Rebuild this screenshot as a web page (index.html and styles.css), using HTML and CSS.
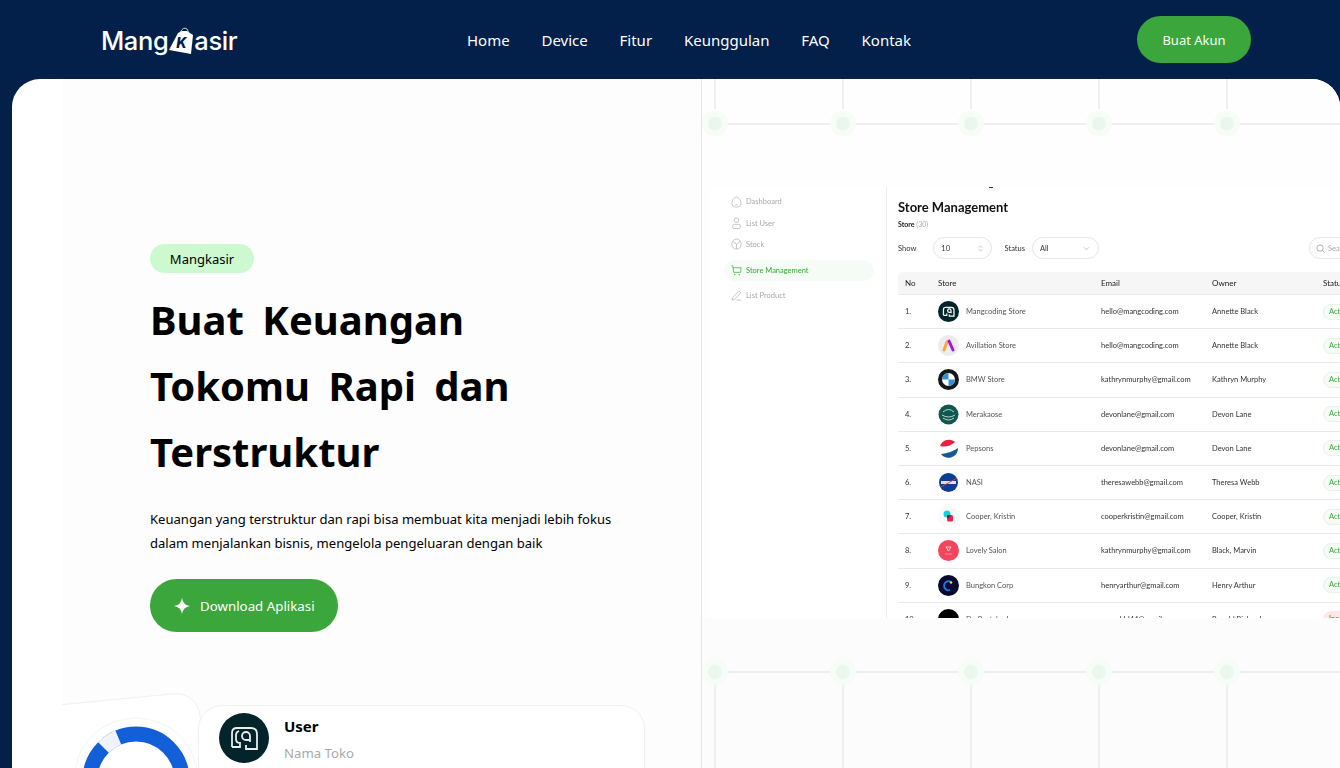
FILE: index.html
```html
<!DOCTYPE html>
<html lang="id">
<head>
<meta charset="utf-8">
<title>Mangkasir</title>
<link rel="stylesheet" href="styles.css">
</head>
<body>
<header class="topbar">
  <a class="logo"><span>Mang</span><span class="bag"><svg viewBox="0 0 28 30" width="28" height="30"><path d="M12 8 Q15 1 19 4 Q21 6 20 9" fill="none" stroke="#c9d6e6" stroke-width="1"/><path d="M10 8 L1 25 L23 29 L25 10 L19 6 L14 6 Z" fill="#fff"/></svg><b class="bag-k">K</b></span><span>asir</span></a>
  <nav class="nav"><a>Home</a><a>Device</a><a>Fitur</a><a>Keunggulan</a><a>FAQ</a><a>Kontak</a></nav>
  <a class="cta">Buat Akun</a>
</header>
<main class="panel">
  <section class="hero">
    <span class="badge">Mangkasir</span>
    <h1>Buat Keuangan<br>Tokomu Rapi dan<br>Terstruktur</h1>
    <p>Keuangan yang terstruktur dan rapi bisa membuat kita menjadi lebih fokus<br>dalam menjalankan bisnis, mengelola pengeluaran dengan baik</p>
    <a class="download"><svg viewBox="0 0 16 16" width="16" height="16"><path d="M8 0 Q9 7 16 8 Q9 9 8 16 Q7 9 0 8 Q7 7 8 0 Z" fill="#fff"/></svg>Download Aplikasi</a>
    <div class="chart-card"></div>
    <svg class="donut" viewBox="0 0 130 130" width="130" height="130">
      <circle cx="65" cy="65" r="62" fill="#fff" stroke="#f3f3f3"/>
      <circle cx="65" cy="65" r="46" fill="none" stroke="#125fd8" stroke-width="15"/>
      <path d="M32.5 32.5 A46 46 0 0 1 47.3 22.5" fill="none" stroke="#eef3fd" stroke-width="15"/>
    </svg>
    <div class="user-card">
      <svg class="avatar" viewBox="0 0 50 50" width="50" height="50">
        <circle cx="25" cy="25" r="25" fill="#03242a"/>
        <path d="M13 34 V20 Q13 15 18 15 H32 Q38 15 38 21 V36 H27 V32 M13 34 H21 V30 Q17 30 17 26 V22 Q17 19 20 18 M31 29 V23 A4 4 0 1 0 27 27 H31" fill="none" stroke="#e8eeee" stroke-width="1.8"/>
      </svg>
      <div><strong>User</strong><span>Nama Toko</span></div>
    </div>
  </section>
  <section class="showcase">
    <svg class="strip strip-top" viewBox="0 0 638 108" width="638" height="108">
      <g stroke="#efefef" stroke-width="2" fill="none">
        <path d="M141 0V30M269 0V30M397 0V30M525 0V30M13 0V30"/>
        <path d="M26 45H128M154 45H256M282 45H384M410 45H512M538 45H638"/>
      </g>
      <g fill="#f6fcf6"><circle cx="13" cy="44.5" r="13"/><circle cx="141" cy="44.5" r="13"/><circle cx="269" cy="44.5" r="13"/><circle cx="397" cy="44.5" r="13"/><circle cx="525" cy="44.5" r="13"/></g>
      <g fill="#ebf7ec"><circle cx="13" cy="44.5" r="7"/><circle cx="141" cy="44.5" r="7"/><circle cx="269" cy="44.5" r="7"/><circle cx="397" cy="44.5" r="7"/><circle cx="525" cy="44.5" r="7"/></g>
    </svg>
    <div class="shot">
      <aside class="side">
        <div class="side-item"><svg viewBox="0 0 12 13" width="11" height="12"><path d="M6 1 Q11 3 11 8 Q11 12 6 12 Q1 12 1 8 Q1 3 6 1 Z M4.5 9.5 H7.5" fill="none" stroke="#aaa" stroke-width=".7"/></svg>Dashboard</div>
        <div class="side-item"><svg viewBox="0 0 12 13" width="11" height="12"><circle cx="6" cy="3.5" r="2.5" fill="none" stroke="#aaa" stroke-width=".7"/><rect x="1.5" y="8" width="9" height="4.5" rx="2.2" fill="none" stroke="#aaa" stroke-width=".7"/></svg>List User</div>
        <div class="side-item"><svg viewBox="0 0 12 13" width="11" height="12"><path d="M6 1 Q11 2 11 6.5 Q11 12 6 12 Q1 12 1 6.5 Q1 2 6 1 Z M2 4 L6 6.5 L10 4 M6 6.5 V12" fill="none" stroke="#aaa" stroke-width=".7"/></svg>Stock</div>
        <div class="side-item side-active"><svg viewBox="0 0 12 12" width="11" height="11"><path d="M0.5 1 H2 L3 8 H10.5 L11 3 H2.5" fill="none" stroke="#3aa63b" stroke-width=".8"/><circle cx="4" cy="10.5" r=".7" fill="#3aa63b"/><circle cx="9" cy="10.5" r=".7" fill="#3aa63b"/></svg>Store Management</div>
        <div class="side-item"><svg viewBox="0 0 12 12" width="11" height="11"><path d="M1 11 L2 8 L8 2 Q9 1 10 2 Q11 3 10 4 L4 10 Z M6 11 H11" fill="none" stroke="#aaa" stroke-width=".7"/></svg>List Product</div>
      </aside>
      <div class="store">
        <h2>Store Management</h2>
        <div class="count"><b>Store</b> <span>(30)</span></div>
        <div class="tools">
          <span>Show</span><span class="sel sel-show">10<svg viewBox="0 0 6 8" width="5" height="7"><path d="M1 3 L3 1 L5 3 M1 5 L3 7 L5 5" fill="none" stroke="#999" stroke-width=".7"/></svg></span>
          <span class="tool-status">Status</span><span class="sel sel-status">All<svg viewBox="0 0 8 6" width="7" height="5"><path d="M1 1.5 L4 4.5 L7 1.5" fill="none" stroke="#999" stroke-width=".7"/></svg></span>
          <span class="search"><svg viewBox="0 0 10 10" width="9" height="9"><circle cx="4.5" cy="4.5" r="3.5" fill="none" stroke="#888" stroke-width=".7"/><path d="M7 7 L9.5 9.5" stroke="#888" stroke-width=".7"/></svg>Search</span>
        </div>
        <div class="row row-head"><span>No</span><span>Store</span><span>Email</span><span>Owner</span><span>Status</span></div>
        <div class="row"><span>1.</span><span class="st"><svg viewBox="0 0 50 50" width="21" height="21"><circle cx="25" cy="25" r="25" fill="#03242a"/><path d="M13 34 V20 Q13 15 18 15 H32 Q38 15 38 21 V36 H27 V32 M13 34 H21 V30 M31 29 V23 A4 4 0 1 0 27 27 H31" fill="none" stroke="#fff" stroke-width="3"/></svg>Mangcoding Store</span><span>hello@mangcoding.com</span><span>Annette Black</span><span class="pill">Active</span></div>
        <div class="row"><span>2.</span><span class="st"><svg viewBox="0 0 21 21" width="21" height="21"><circle cx="10.5" cy="10.5" r="10.5" fill="#ececec"/><path d="M6 15 L9 7" stroke="#f8a73c" stroke-width="3" stroke-linecap="round"/><path d="M11 6 L15 15" stroke="#a912e0" stroke-width="3" stroke-linecap="round"/></svg>Avillation Store</span><span>hello@mangcoding.com</span><span>Annette Black</span><span class="pill">Active</span></div>
        <div class="row"><span>3.</span><span class="st"><svg viewBox="0 0 21 21" width="21" height="21"><circle cx="10.5" cy="10.5" r="10.5" fill="#171717"/><circle cx="10.5" cy="10.5" r="6.5" fill="#fff"/><path d="M10.5 4V10.5H4A6.5 6.5 0 0 1 10.5 4ZM10.5 17V10.5H17A6.5 6.5 0 0 1 10.5 17Z" fill="#2e94d6"/></svg>BMW Store</span><span>kathrynmurphy@gmail.com</span><span>Kathryn Murphy</span><span class="pill">Active</span></div>
        <div class="row"><span>4.</span><span class="st"><svg viewBox="0 0 21 21" width="21" height="21"><circle cx="10.5" cy="10.5" r="10" fill="#10574f"/><path d="M4 11 Q10.5 15 17 11 M5 14 Q10.5 18 16 14 M5 8 Q10.5 3 16 8" fill="none" stroke="#b7d8cc" stroke-width="1"/></svg>Merakaose</span><span>devonlane@gmail.com</span><span>Devon Lane</span><span class="pill">Active</span></div>
        <div class="row"><span>5.</span><span class="st"><svg viewBox="0 0 21 21" width="21" height="21"><circle cx="10.5" cy="10.5" r="9.5" fill="#fff"/><path d="M2 8 A9.5 9.5 0 0 1 17 4 Q10 10 2 8 Z" fill="#e8203a"/><path d="M20 10 A9.5 9.5 0 0 1 3 16 Q13 15 20 10 Z" fill="#155a96"/></svg>Pepsons</span><span>devonlane@gmail.com</span><span>Devon Lane</span><span class="pill">Active</span></div>
        <div class="row"><span>6.</span><span class="st"><svg viewBox="0 0 21 21" width="21" height="21"><circle cx="10.5" cy="10.5" r="9.5" fill="#0d3d91"/><rect x="3" y="9" width="15" height="3" fill="#fff" opacity=".85"/><path d="M3 15 L19 6" stroke="#e03c31" stroke-width="1"/></svg>NASI</span><span>theresawebb@gmail.com</span><span>Theresa Webb</span><span class="pill">Active</span></div>
        <div class="row"><span>7.</span><span class="st"><svg viewBox="0 0 21 21" width="21" height="21"><circle cx="10.5" cy="10.5" r="10.5" fill="#fcf8f8"/><circle cx="9" cy="8" r="3.5" fill="#0cd3e0"/><rect x="9" y="9" width="6" height="6.5" rx="1.5" fill="#ee2050"/><rect x="9" y="9" width="2.5" height="2.5" fill="#111"/></svg>Cooper, Kristin</span><span>cooperkristin@gmail.com</span><span>Cooper, Kristin</span><span class="pill">Active</span></div>
        <div class="row"><span>8.</span><span class="st"><svg viewBox="0 0 21 21" width="21" height="21"><circle cx="10.5" cy="10.5" r="10.5" fill="#f4455f"/><path d="M8 7 L13 7 L10.5 11 Z" fill="none" stroke="#fff" stroke-width=".7"/><path d="M7 14 H14" stroke="#ffc5ce" stroke-width=".5"/></svg>Lovely Salon</span><span>kathrynmurphy@gmail.com</span><span>Black, Marvin</span><span class="pill">Active</span></div>
        <div class="row"><span>9.</span><span class="st"><svg viewBox="0 0 21 21" width="21" height="21"><circle cx="10.5" cy="10.5" r="10.5" fill="#0a0730"/><path d="M13 7 A4.5 4.5 0 1 0 12 15" fill="none" stroke="#1a7de0" stroke-width="1.8"/><circle cx="13" cy="7.5" r="1.3" fill="#e8d83a"/></svg>Bungkon Corp</span><span>henryarthur@gmail.com</span><span>Henry Arthur</span><span class="pill">Active</span></div>
        <div class="row"><span>10.</span><span class="st"><svg viewBox="0 0 21 21" width="21" height="21"><circle cx="10.5" cy="10.5" r="10.5" fill="#000"/></svg>Dr. Pustaka Jaya</span><span>ronaaldd44@gmail.com</span><span>Ronald Richards</span><span class="pill pill-off">Inactive</span></div>
      </div>
    </div>
    <svg class="strip strip-bottom" viewBox="0 0 638 150" width="638" height="150">
      <g stroke="#efefef" stroke-width="2" fill="none">
        <path d="M13 67V150M141 67V150M269 67V150M397 67V150M525 67V150"/>
        <path d="M26 54H128M154 54H256M282 54H384M410 54H512M538 54H638"/>
      </g>
      <g fill="#f6fcf6"><circle cx="13" cy="54" r="13"/><circle cx="141" cy="54" r="13"/><circle cx="269" cy="54" r="13"/><circle cx="397" cy="54" r="13"/><circle cx="525" cy="54" r="13"/></g>
      <g fill="#ebf7ec"><circle cx="13" cy="54" r="7"/><circle cx="141" cy="54" r="7"/><circle cx="269" cy="54" r="7"/><circle cx="397" cy="54" r="7"/><circle cx="525" cy="54" r="7"/></g>
    </svg>
  </section>
</main>
</body>
</html>
```
FILE: styles.css
```css
* { box-sizing: border-box; }
html, body { margin: 0; height: 100%; }
body {
  height: 768px;
  overflow: hidden;
  background: #02204a;
  font-family: "Noto Sans", "Open Sans", sans-serif;
  color: #000;
}
.topbar {
  height: 79px;
  display: flex;
  align-items: center;
  padding: 0 89px 0 101px;
  color: #fff;
}
.logo {
  width: 366px;
  display: flex;
  align-items: center;
  font-family: Inter, sans-serif;
  font-size: 25.5px;
  font-weight: 500;
  letter-spacing: -0.4px;
  margin-top: 2px;
}
.bag { position: relative; width: 28px; height: 30px; margin: -2px -2px 0 0; }
.bag svg { display: block; }
.bag-k {
  position: absolute;
  left: 8px;
  top: 8px;
  color: #02204a;
  font-size: 14px;
  line-height: 20px;
  font-style: italic;
  font-weight: 800;
}
.nav { display: flex; gap: 31.8px; font-size: 15px; line-height: 20px; }
.cta {
  margin-left: auto;
  width: 114px;
  height: 47px;
  border-radius: 24px;
  background: #3aa63b;
  display: flex;
  align-items: center;
  justify-content: center;
  font-size: 13px;
}
.panel {
  margin-left: 12px;
  height: 689px;
  background: #fff;
  border-radius: 28px 28px 0 0;
  display: flex;
  overflow: hidden;
  padding-left: 50px;
}
.hero {
  position: relative;
  width: 639px;
  background: #fdfdfd;
  padding: 165px 0 0 88px;
  overflow: hidden;
}
.badge {
  display: block;
  width: 104px;
  height: 29px;
  border-radius: 15px;
  background: #ccf9cf;
  font-size: 13px;
  line-height: 30px;
  text-align: center;
}
h1 {
  margin: 14px 0 0;
  font-size: 40px;
  line-height: 66px;
  font-weight: 700;
  word-spacing: 8px;
}
.hero p {
  margin: 22px 0 0;
  font-size: 13.05px;
  line-height: 24px;
}
.download {
  margin-top: 24px;
  width: 188px;
  height: 53px;
  border-radius: 27px;
  background: #3aa63b;
  color: #fff;
  display: flex;
  align-items: center;
  gap: 10px;
  padding-left: 24px;
  font-size: 13.3px;
}
.chart-card {
  position: absolute;
  left: -30px;
  top: 620px;
  width: 176px;
  height: 200px;
  background: #fff;
  border: 1px solid #f1f1f1;
  border-radius: 24px;
  transform: rotate(-5.5deg);
}
.donut { position: absolute; left: 9px; top: 636px; }
.user-card {
  position: absolute;
  left: 136px;
  top: 626px;
  width: 447px;
  height: 120px;
  background: #fff;
  border: 1px solid #f0f0f0;
  border-radius: 24px;
  display: flex;
  gap: 15px;
  padding: 7px 20px;
}
.avatar { flex: none; }
.user-card strong { display: block; font-size: 15px; line-height: 20px; margin-top: 3px; }
.user-card span { display: block; margin-top: 7px; font-size: 13.2px; line-height: 20px; color: #aaa; }
.showcase {
  width: 639px;
  border-left: 1px solid #e4e4e4;
  background: #fefefe;
  display: flex;
  flex-direction: column;
  font-family: Lato, sans-serif;
}
.strip { display: block; flex: none; }
.strip-bottom { background: #fcfcfc; }
.shot { height: 431px; flex: none; display: flex; padding-left: 7px; overflow: hidden; filter: blur(0.3px); }
.side {
  width: 178px;
  flex: none;
  background: #fff;
  border-right: 1px solid #ececec;
  padding: 4px 12px 0 15px;
  color: #aaa;
  font-size: 7.5px;
}
.side-item { display: flex; align-items: center; gap: 4px; height: 21.4px; padding-left: 7px; }
.side-active {
  height: 21px;
  margin: 5px 0 4px;
  width: 150px;
  border-radius: 11px;
  background: #f5fbf5;
  color: #3aa63b;
}
.store { position: relative; flex: 1; min-width: 0; background: #fff; padding: 12px 0 0 11px; overflow: hidden; }
.store::before { content: ""; position: absolute; left: 102px; top: 0; width: 4px; height: 1px; background: #333; }
h2 { margin: 0; font-size: 13px; line-height: 16px; font-weight: 700; color: #111; }
.count { margin-top: 4px; font-size: 7px; line-height: 10px; color: #222; }
.count span { color: #aaa; }
.tools { display: flex; align-items: center; width: 480px; height: 22px; margin-top: 8px; font-size: 7.5px; color: #333; }
.sel {
  height: 22px;
  border: 1px solid #e6e6e6;
  border-radius: 11px;
  display: flex;
  align-items: center;
  justify-content: space-between;
  padding: 0 8px 0 7px;
}
.sel-show { width: 59px; margin-left: 17px; }
.tool-status { margin-left: 13px; }
.sel-status { width: 68px; margin-left: 7px; }
.search {
  margin-left: 210px;
  height: 22px;
  width: 70px;
  border: 1px solid #e6e6e6;
  border-radius: 11px;
  display: flex;
  align-items: center;
  gap: 3px;
  padding-left: 6px;
  color: #aaa;
}
.row {
  display: grid;
  grid-template-columns: 33px 163px 111px 111px 60px;
  width: 480px;
  height: 34.2px;
  padding-left: 7px;
  align-items: center;
  border-bottom: 1px solid #eaeaea;
  font-size: 7.5px;
  color: #333;
  white-space: nowrap;
}
.row-head {
  height: 23px;
  margin-top: 13px;
  background: #f6f6f6;
  border-radius: 4px 4px 0 0;
  font-size: 8px;
  color: #222;
}
.st { display: flex; align-items: center; gap: 7px; color: #555; }
.st svg { flex: none; }
.pill {
  justify-self: start;
  height: 16px;
  width: 38px;
  border: 1px solid #e6f3e6;
  border-radius: 8px;
  background: #f5fbf5;
  color: #3aa63b;
  line-height: 14px;
  padding-left: 5px;
}
.pill-off { background: #fde8e8; color: #e33; border-color: #fde8e8; }
```
